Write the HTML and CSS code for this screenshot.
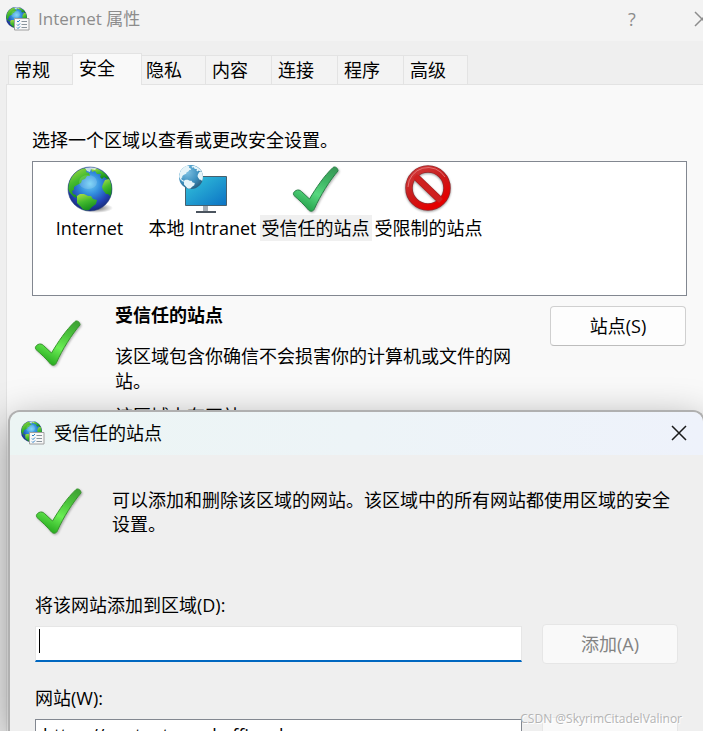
FILE: index.html
```html
<!DOCTYPE html>
<html lang="zh-CN">
<head>
    <meta charset="UTF-8">
    <meta name="viewport" content="width=device-width, initial-scale=1.0">
    <title>Internet 属性</title>
    <link rel="stylesheet" href="styles.css">
</head>
<body>
    <!-- shared icons -->
    <svg class="defs" width="0" height="0" aria-hidden="true">
        <defs>
            <radialGradient id="sea" cx="50%" cy="38%" r="62%">
                <stop offset="0" stop-color="#6fd0f5"/>
                <stop offset="0.4" stop-color="#318bdc"/>
                <stop offset="0.75" stop-color="#2343b4"/>
                <stop offset="1" stop-color="#172b78"/>
            </radialGradient>
            <radialGradient id="ice" cx="35%" cy="30%" r="75%">
                <stop offset="0" stop-color="#7cc0e2"/>
                <stop offset="0.6" stop-color="#3d90bf"/>
                <stop offset="1" stop-color="#285f80"/>
            </radialGradient>
            <linearGradient id="land" x1="0" y1="0" x2="0.4" y2="1">
                <stop offset="0" stop-color="#b5e04a"/>
                <stop offset="0.5" stop-color="#44bb2e"/>
                <stop offset="1" stop-color="#168c1c"/>
            </linearGradient>
            <linearGradient id="screen" x1="0" y1="0" x2="1" y2="1">
                <stop offset="0" stop-color="#34c6dc"/>
                <stop offset="1" stop-color="#0c72c4"/>
            </linearGradient>
            <linearGradient id="green" x1="0.8" y1="0" x2="0.3" y2="1">
                <stop offset="0" stop-color="#3fa535"/>
                <stop offset="0.3" stop-color="#4cc63c"/>
                <stop offset="0.6" stop-color="#6bee55"/>
                <stop offset="1" stop-color="#22a51b"/>
            </linearGradient>
            <linearGradient id="teal" x1="0.8" y1="0" x2="0.3" y2="1">
                <stop offset="0" stop-color="#3a9a58"/>
                <stop offset="0.3" stop-color="#3fb765"/>
                <stop offset="0.6" stop-color="#58d880"/>
                <stop offset="1" stop-color="#239f49"/>
            </linearGradient>
            <linearGradient id="red" x1="0" y1="0" x2="0.6" y2="1">
                <stop offset="0" stop-color="#d23c3c"/>
                <stop offset="0.5" stop-color="#c81e1e"/>
                <stop offset="1" stop-color="#e40000"/>
            </linearGradient>
            <radialGradient id="shade">
                <stop offset="0" stop-color="#000" stop-opacity="0.6"/>
                <stop offset="1" stop-color="#000" stop-opacity="0"/>
            </radialGradient>
            <clipPath id="ball"><circle cx="24" cy="24" r="22"/></clipPath>
        </defs>
        <symbol id="continents" viewBox="0 0 48 48">
            <g clip-path="url(#ball)">
                <path d="M2 22C3 11 10 4 17 3l4 1-1 3 3 1 1 3-3 0-2 3-3 1-1 3-4 2-3 2 0 3-2 1 1 3 3 1 1 3-3-1-4-4-2-4z"/>
                <path d="M11 31l3-2 4 0 4 2 3 0 2 3 4 1-1 4-4 3-3 3-5 1-3-4-4-4z"/>
                <path d="M37 19l2-4 4-1 4 4 1 9-3 5-3-3-2 0-3-4-1-3z"/>
                <path d="M25 4l5-1 6 3 5 4 3 4-3 0-3-2-2 2-2-2 1-3-4 0-2-3-3 1z"/>
            </g>
        </symbol>
        <symbol id="globe" viewBox="0 0 48 48">
            <ellipse cx="30" cy="43" rx="17" ry="5" fill="url(#shade)"/>
            <circle cx="24" cy="24" r="22" fill="url(#sea)"/>
            <use href="#continents" fill="url(#land)"/>
            <path d="M19 3l6-1 6 1-2 2-4-1-1 3-3-1z" fill="#eef6ee" opacity="0.8"/>
            <ellipse cx="22" cy="17" rx="9" ry="7" fill="#fff" opacity="0.15"/>
            <circle cx="24" cy="24" r="22" fill="none" stroke="#1d377c" stroke-opacity="0.5"/>
        </symbol>
        <symbol id="globe-list" viewBox="0 0 24 24">
            <svg width="21" height="21" viewBox="2 2 44 44"><use href="#globe" width="48" height="48"/></svg>
            <path d="M8.500 11.500h14.500v11.500h-14.500z" fill="#f8f8f8" stroke="#a0a0a0"/>
            <path d="M11 14l1 1 2-2M11 17.500l1 1 2-2M11 20.500l1 1 2-2" fill="none" stroke="#2a7ec4"/>
            <path d="M15.500 14.500h5.500M15.500 17.500h5.500M15.500 20.500h5.500" stroke="#8a949c"/>
        </symbol>
        <symbol id="check-shape" viewBox="0 0 48 48">
            <path d="M41 2.500c2-1.500 5 0.500 5 3.500C38 15 28 31 22.500 43.500c-1 3-4 3.500-6 1.500C12 39.500 7 35 2 30.500c-1.500-2 0-4 2-5 2-1 4-0.500 5.500 1l8 7.500C24 23 32 11 41 2.500z"/>
        </symbol>
    </svg>

    <main class="window">
        <header class="titlebar">
            <svg class="app-icon"><use href="#globe-list"/></svg>
            <h1>Internet 属性</h1>
            <button class="caption" type="button">?</button>
            <button class="caption" type="button" aria-label="关闭">
                <svg width="16" height="16" viewBox="0 0 16 16"><path d="M1 1l14 14M15 1L1 15"/></svg>
            </button>
        </header>

        <nav class="tabs">
            <button class="tab" type="button">常规</button>
            <button class="tab active" type="button">安全</button>
            <button class="tab" type="button">隐私</button>
            <button class="tab" type="button">内容</button>
            <button class="tab" type="button">连接</button>
            <button class="tab" type="button">程序</button>
            <button class="tab" type="button">高级</button>
        </nav>

        <section class="panel">
            <p class="hint">选择一个区域以查看或更改安全设置。</p>
            <div class="zones">
                <button class="zone" type="button">
                    <svg class="icon"><use href="#globe"/></svg>
                    <span>Internet</span>
                </button>
                <button class="zone" type="button">
                    <svg class="icon" viewBox="0 0 48 48">
                        <path d="M24 41h5v5h-5z" fill="#a5adb5"/>
                        <path d="M17 46h20v2h-20z" fill="#4b545e"/>
                        <path d="M6.500 11.500h41v29h-41z" fill="url(#screen)" stroke="#47606e"/>
                        <circle cx="12" cy="12" r="12" fill="url(#ice)"/>
                        <use href="#continents" x="-1" y="-1" width="26" height="26" fill="#e5f4f9"/>
                    </svg>
                    <span>本地 Intranet</span>
                </button>
                <button class="zone selected" type="button">
                    <svg class="icon check"><use href="#check-shape" fill="url(#teal)" stroke="#2b8048"/></svg>
                    <span>受信任的站点</span>
                </button>
                <button class="zone" type="button">
                    <svg class="icon no-entry" viewBox="0 0 48 48">
                        <circle cx="23" cy="23" r="19" fill="none" stroke="#96282c" stroke-width="7.500"/>
                        <path d="M10 11l26 25" stroke="#a91d20" stroke-width="7"/>
                        <circle cx="23" cy="23" r="19" fill="none" stroke="url(#red)" stroke-width="6"/>
                        <path d="M10 11l26 25" stroke="#cf2020" stroke-width="5.500"/>
                        <path d="M3 22a20 20 0 0 1 37-10" fill="none" stroke="#f0a0a0" stroke-opacity="0.600"/>
                    </svg>
                    <span>受限制的站点</span>
                </button>
            </div>

            <div class="detail">
                <svg class="icon check"><use href="#check-shape" fill="url(#green)" stroke="#37952c"/></svg>
                <div class="detail-text">
                    <h2>受信任的站点</h2>
                    <p>该区域包含你确信不会损害你的计算机或文件的网站。</p>
                    <p>该区域中有网站。</p>
                </div>
                <button class="btn" type="button">站点(S)</button>
            </div>
        </section>
    </main>

    <div class="dialog" role="dialog" aria-labelledby="dialog-title">
        <header class="dialog-bar">
            <svg class="app-icon"><use href="#globe-list"/></svg>
            <h2 id="dialog-title">受信任的站点</h2>
            <button class="close" type="button" aria-label="关闭">
                <svg width="16" height="16" viewBox="0 0 16 16"><path d="M1 1l14 14M15 1L1 15"/></svg>
            </button>
        </header>
        <div class="dialog-body">
            <div class="intro">
                <svg class="icon check"><use href="#check-shape" fill="url(#green)" stroke="#37952c"/></svg>
                <p>可以添加和删除该区域的网站。该区域中的所有网站都使用区域的安全设置。</p>
            </div>
            <form class="sites">
                <label for="site">将该网站添加到区域(D):</label>
                <input type="text" id="site">
                <button class="btn" type="button" disabled>添加(A)</button>
                <label class="list-label" for="list">网站(W):</label>
                <select id="list" size="5">
                    <option>https://content.word.office.d</option>
                </select>
                <button class="btn" type="button" aria-label="删除" disabled></button>
            </form>
        </div>
    </div>

    <div class="watermark">CSDN @SkyrimCitadelValinor</div>
</body>
</html>
```

FILE: styles.css
```css
* {
    box-sizing: border-box;
}
html, body {
    height: 100%;
    margin: 0;
    overflow: hidden;
}
body {
    position: relative;
    font-family: "Open Sans", "Noto Sans CJK SC", sans-serif;
    font-size: 18px;
    line-height: 24px;
    color: #000;
    background-color: #efefef;
}
h1, h2, p {
    margin: 0;
    font-size: 18px;
}
button, input, select {
    font: inherit;
    color: inherit;
}
.defs {
    position: absolute;
}
.window {
    height: 100%;
    display: flex;
    flex-direction: column;
    overflow: hidden;
}

/* title bar */
.titlebar {
    display: flex;
    flex: none;
    align-items: center;
    height: 41px;
    margin-right: -34px;
    padding: 0 0 4px 6px;
    background-color: #f3f3f3;
    color: #8c8c8c;
}
.titlebar h1 {
    flex: 1;
    font-size: 17px;
    font-weight: normal;
}
.app-icon {
    width: 24px;
    height: 24px;
    margin-right: 8px;
}
.caption, .close {
    display: flex;
    align-items: center;
    justify-content: center;
    height: 36px;
    padding: 0;
    border: none;
    background: none;
}
.caption {
    width: 70px;
}
.caption path, .close path {
    fill: none;
    stroke: currentColor;
    stroke-width: 1.5;
}

/* tabs */
.tabs {
    display: flex;
    align-items: flex-end;
    margin: 12px 0 -1px 8px;
    z-index: 1;
}
.tab {
    width: 66px;
    height: 30px;
    padding: 0 0 0 6px;
    border: 1px solid #e3e3e3;
    border-left-width: 0;
    background-color: #f3f3f3;
    text-align: left;
}
.tab:first-child {
    width: 64px;
    padding-left: 5px;
    border-left-width: 1px;
    border-right-width: 0;
}
.tab.active {
    width: 70px;
    height: 32px;
    padding: 0 0 3px 6px;
    border-left-width: 1px;
    border-bottom: none;
    background-color: #f9f9f9;
}
.tab.active + .tab {
    width: 64px;
    padding-left: 4px;
}
.tab:last-child {
    width: 64px;
}
.panel {
    flex: 1;
    min-height: 0;
    margin-left: 6px;
    padding: 43px 16px 0 25px;
    border: 1px solid #e3e3e3;
    border-width: 1px 0 0 1px;
    background-color: #f9f9f9;
}
.hint {
    margin-bottom: 9px;
}

/* zone list */
.zones {
    display: flex;
    align-items: flex-start;
    height: 135px;
    padding-top: 3px;
    border: 1px solid #828790;
    background-color: #fff;
}
.zone {
    display: flex;
    flex-direction: column;
    align-items: center;
    gap: 2px;
    width: 113px;
    padding: 0;
    border: none;
    background: none;
    white-space: nowrap;
}
.zone span {
    padding: 0 2px;
    line-height: 26px;
}
.zone.selected span {
    background-color: #f0f0f0;
}
.icon {
    flex: none;
    width: 48px;
    height: 48px;
    overflow: visible;
}
.check {
    filter: drop-shadow(1px 1px 1px rgba(0, 0, 0, 0.3));
}
.no-entry {
    filter: drop-shadow(0 1px 1px rgba(0, 0, 0, 0.4));
}

/* selected zone */
.detail {
    display: flex;
    align-items: flex-start;
    gap: 33px;
    padding: 10px 1px 0 2px;
}
.detail .icon {
    margin-top: 13px;
}
.detail-text {
    flex: 1;
}
.detail h2 {
    margin: -3px 0 17px;
}
.detail p {
    margin-bottom: 10px;
    line-height: 25px;
}
.btn {
    width: 136px;
    height: 40px;
    padding: 0;
    border: 1px solid #d0d0d0;
    border-bottom-color: #bdbdbd;
    border-radius: 4px;
    background-color: #fdfdfd;
}
.btn:disabled {
    border-color: #e6e6e6;
    background-color: #f9f9f9;
    color: #838383;
}

/* dialog window over the first one */
.dialog {
    position: absolute;
    top: 410px;
    right: -2px;
    bottom: 0;
    left: 8px;
    z-index: 2;
    overflow: hidden;
    border: 2px solid #b0b0b0;
    border-bottom: none;
    border-radius: 12px 12px 0 0;
    background-color: #efefef;
    box-shadow: 0 12px 40px rgba(0, 0, 0, 0.4);
}
.dialog-bar {
    display: flex;
    align-items: center;
    height: 43px;
    padding: 0 0 2px 11px;
    background: linear-gradient(to right, #ecf5f4, #edf4f7 50%, #eef2fb);
}
.dialog-bar h2 {
    flex: 1;
    font-weight: normal;
}
.dialog-bar .app-icon {
    margin-right: 9px;
}
.close {
    width: 48px;
    color: #1a1a1a;
}
.dialog-body {
    padding: 33px 25px 0 25px;
}
.intro {
    display: flex;
    gap: 29px;
    margin-bottom: 57px;
}
.sites {
    display: grid;
    grid-template-columns: 1fr 136px;
    align-items: start;
    column-gap: 20px;
    row-gap: 7px;
}
.intro .icon {
    margin-top: -1px;
}
.sites label {
    grid-column: 1 / -1;
}
.sites .list-label {
    margin-top: 15px;
}
.sites input {
    height: 36px;
    margin: 2px 0 0;
    padding: 0 4px;
    border: 1px solid #e6e6e6;
    border-bottom: 2px solid #0067c0;
    outline: none;
    /* text cursor */
    background: linear-gradient(#000, #000) 3px 2px / 1px 24px no-repeat #fff;
}
.sites select {
    height: 130px;
    margin-top: 2px;
    padding: 3px 5px;
    border: 1px solid #828790;
    border-radius: 0;
    background-color: #fff;
    overflow: hidden;
}
.watermark {
    position: absolute;
    right: 21px;
    bottom: 3px;
    z-index: 3;
    font-size: 12px;
    line-height: 18px;
    color: #b4b4b4;
    text-shadow: 1px 1px 0 #fff;
}
```
